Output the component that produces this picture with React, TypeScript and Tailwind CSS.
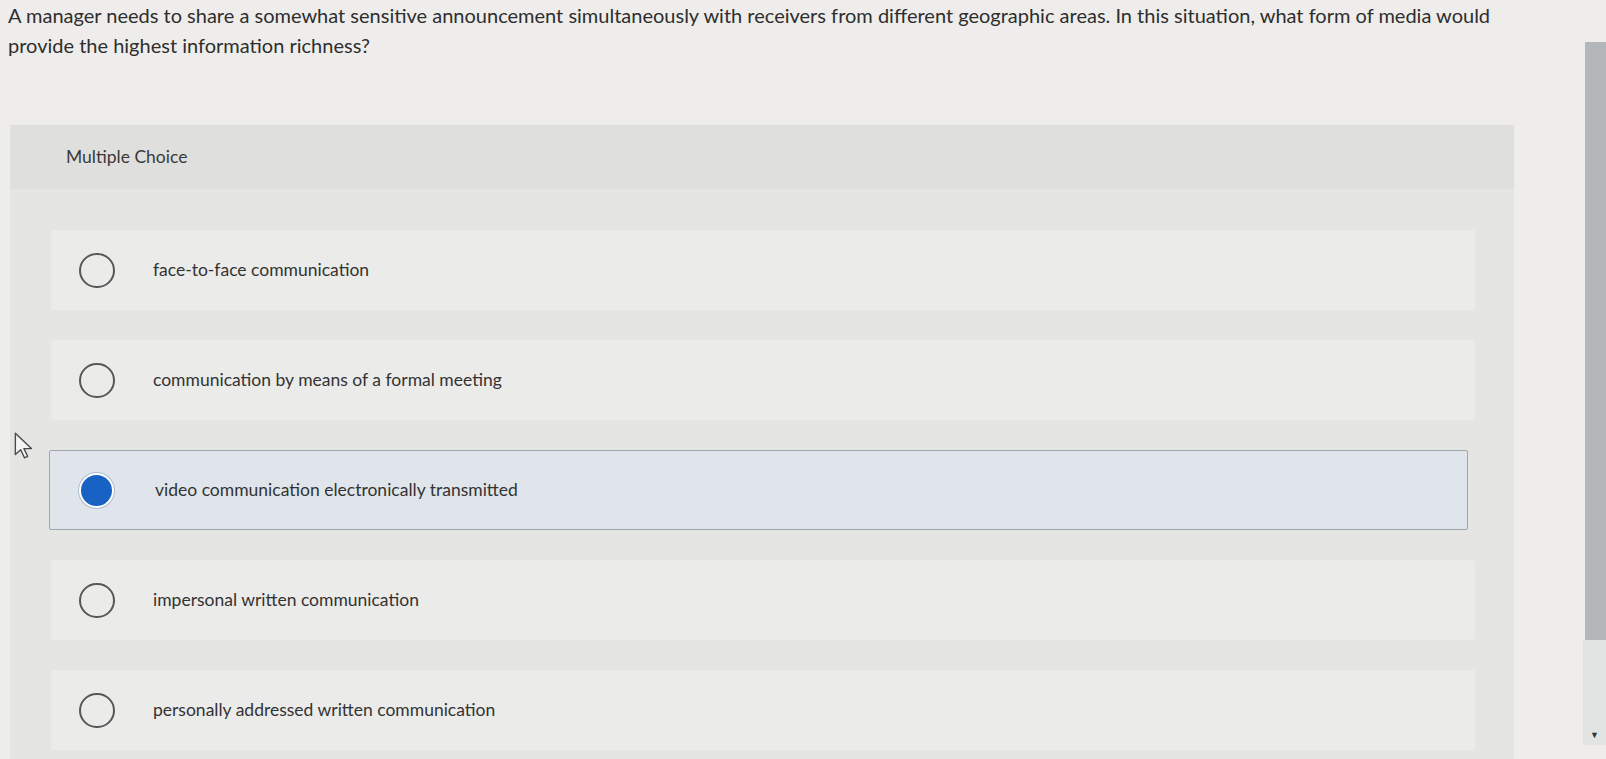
import { useState } from 'react'

const options = [
  'face-to-face communication',
  'communication by means of a formal meeting',
  'video communication electronically transmitted',
  'impersonal written communication',
  'personally addressed written communication',
]

function Cursor() {
  return (
    <svg width="24" height="30" viewBox="0 0 22 28" className="absolute left-[13px] top-[431px]">
      <path
        d="M2 2 L2 22 L7 17.5 L10.5 25 L13.5 23.6 L10 16.4 L17 16.4 Z"
        fill="#f4f4f4"
        stroke="#4a4a4a"
        strokeWidth="1.3"
        strokeLinejoin="round"
      />
    </svg>
  )
}

export default function App() {
  const [selected, setSelected] = useState(2)

  return (
    <div className="relative flex h-[759px] w-[1606px] overflow-hidden bg-[#eeedeb] font-['Lato',sans-serif] text-[#2e2e2e]">
      <div className="flex-1 pl-[8px]">
        <p className="w-[1500px] text-[20px] leading-[30px]">
          A manager needs to share a somewhat sensitive announcement simultaneously with receivers from different
          geographic areas. In this situation, what form of media would provide the highest information richness?
        </p>

        <div className="mt-[65px] ml-[2px] w-[1504px] bg-[#e5e5e4] pb-[20px]">
          <div className="flex h-[64px] items-center bg-[#dfdfde] pl-[56px] text-[17.5px] text-[#3a3a3a]">
            Multiple Choice
          </div>

          <div className="flex flex-col gap-[30px] pt-[41px] pl-[41px] pr-[39px]">
            {options.map((opt, i) => {
              const isSel = selected === i
              return (
                <button
                  key={i}
                  onClick={() => setSelected(i)}
                  className={`flex h-[80px] items-center rounded-[2px] text-left ${
                    isSel
                      ? '-ml-[2px] mr-[7px] border border-[#9ea6ae] bg-[#dfe5ea] pl-[29px]'
                      : 'bg-[#ebebea] pl-[28px]'
                  }`}
                >
                  {isSel ? (
                    <span className="h-[35px] w-[35px] shrink-0 rounded-full border-2 border-white bg-[#1762c2] ring-1 ring-[#a9bccf]" />
                  ) : (
                    <span className="h-[35px] w-[36px] shrink-0 rounded-full border-2 border-[#575757]" />
                  )}
                  <span className={`${isSel ? 'ml-[41px]' : 'ml-[38px]'} text-[17.5px] text-[#333]`}>{opt}</span>
                </button>
              )
            })}
          </div>
        </div>
      </div>

      <div className="flex w-[23px] flex-col pt-[42px] pb-[14px]">
        <div className="ml-[2px] h-[598px] bg-[#b4b7ba]" />
        <div className="flex flex-1 items-end justify-center bg-[#e2e3e3] pb-[6px]">
          <span className="text-[9px] leading-none text-[#333]">▼</span>
        </div>
      </div>

      <Cursor />
    </div>
  )
}
